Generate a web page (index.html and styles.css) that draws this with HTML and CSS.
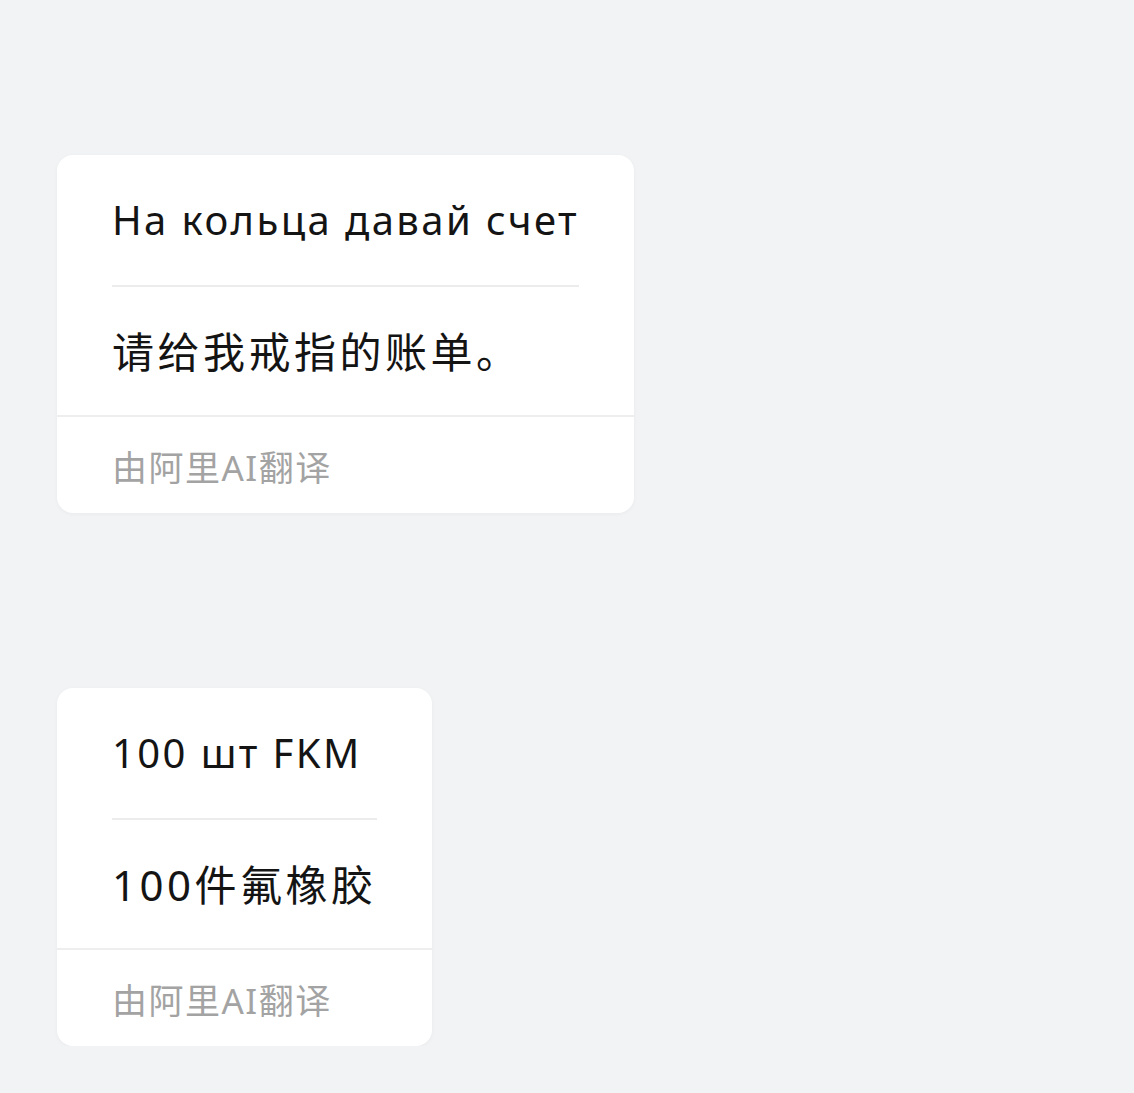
FILE: index.html
```html
<!DOCTYPE html>
<html>
<head>
    <title>Translated messages</title>
    <link rel="stylesheet" href="styles.css">
</head>
<body>
    <div class="chat">
        <div class="bubble">
            <div class="bubble_body">
                <p class="source">На кольца давай счет</p>
                <p class="target">请给我戒指的账单。</p>
            </div>
            <div class="bubble_footer">由阿里AI翻译</div>
        </div>

        <div class="bubble">
            <div class="bubble_body">
                <p class="source">100 шт FKM</p>
                <p class="target">100件氟橡胶</p>
            </div>
            <div class="bubble_footer">由阿里AI翻译</div>
        </div>
    </div>
</body>
</html>
```

FILE: styles.css
```css
/* Page */
body {
    margin: 0;
    background-color: #f2f3f5;
    font-family: "Noto Sans", "Noto Sans CJK SC", sans-serif;
    color: #141414;
}

/* Message column */
.chat {
    display: flex;
    flex-direction: column;
    align-items: flex-start;
    gap: 175px;
    padding: 155px 0 0 57px;
}

/* Message bubble */
.bubble {
    background-color: #ffffff;
    border-radius: 16px;
    box-shadow: 0 1px 4px rgba(0, 0, 0, 0.04);
}

.bubble_body {
    padding: 37px 55px 35px 55px;
}

.bubble_body p {
    margin: 0;
    line-height: 56px;
    white-space: nowrap;
}

.source {
    font-size: 40px;
    letter-spacing: 2.4px;
    padding-bottom: 37px;
    border-bottom: 2px solid #ececec;
}

.target {
    font-size: 42px;
    letter-spacing: 3.5px;
    padding-top: 37px;
}

/* Footer note */
.bubble_footer {
    border-top: 2px solid #eeeeee;
    padding: 27px 55px 21px 55px;
    font-size: 35px;
    line-height: 48px;
    letter-spacing: 1.5px;
    color: #a3a3a3;
}
```
